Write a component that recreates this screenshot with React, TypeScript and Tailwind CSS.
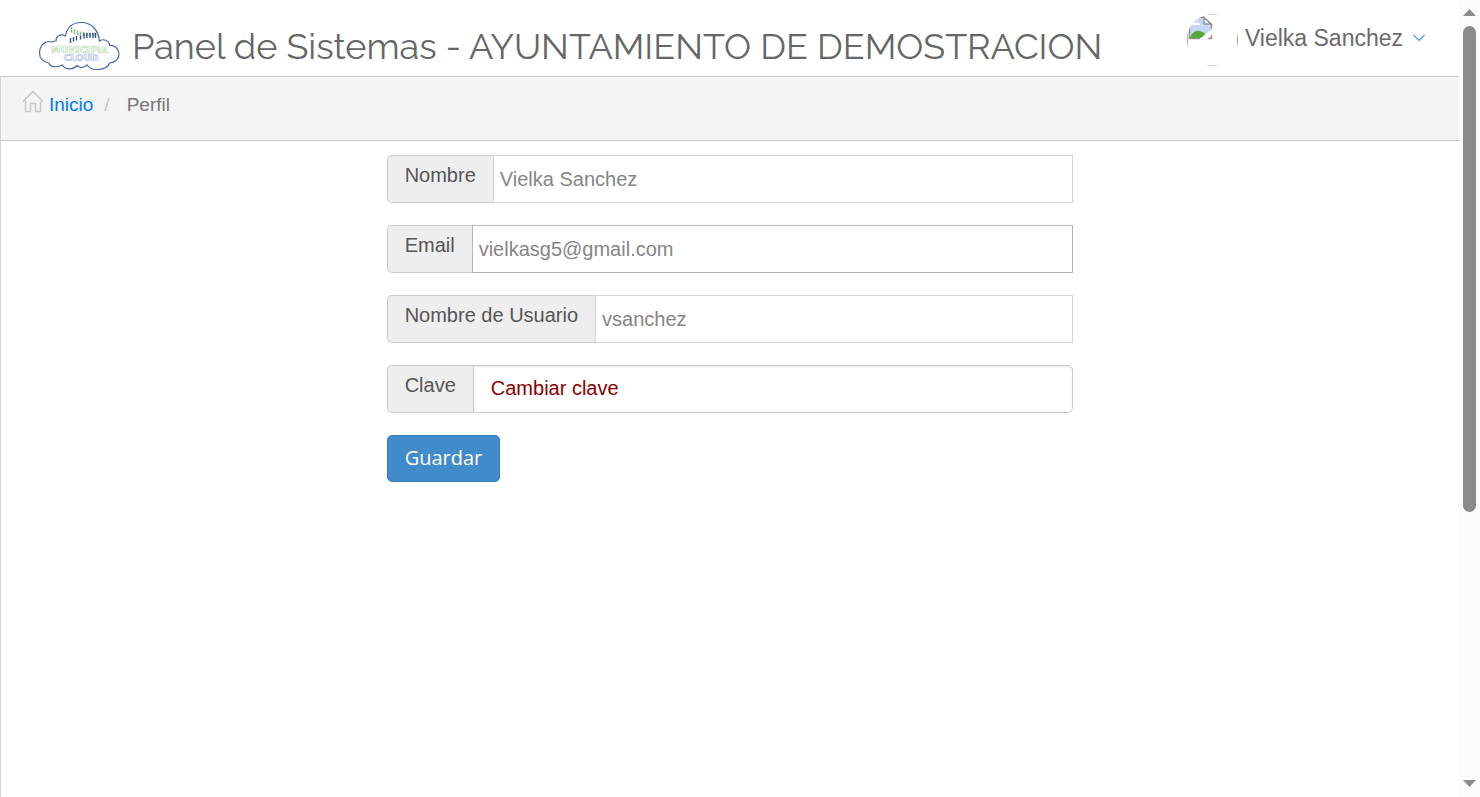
import type { ReactNode } from "react";

function CloudLogo() {
  return (
    <svg width="82" height="50" viewBox="0 0 82 50" role="img" aria-label="Municipia Cloud" className="shrink-0">
      <path
        d="M18 20C18 14.500 23 12.500 27.500 15C29 6 35 1.500 43.500 1.500C53 1.500 60 8 61.500 20C66 17 71.500 20 71.500 24.500C77 24 81 28 81 33C81 38 77 41.500 71.500 42C70 47 64 48.500 59 48.500C54 48.500 51 47 49 44C46 47 42 47 39 44.500C35 49 27 49 24.500 44C18 47 12 46 11 42C5 41 1.500 37 1.500 32C1.500 24 8 19 14 21C15 20 16 20 18 20Z"
        fill="#fff"
        stroke="#4468a8"
        strokeWidth="1.200"
      />
      <path
        d="M33.500 6v5.500M36.500 8.500v4.500M39.500 9.500v4.500M42.500 10.500v4M45.500 11v4M48.500 11.500v3.500M51.500 11.500v3.500M54.500 11.500v3.500M57 11.500v3.500"
        stroke="#8db583"
        strokeWidth="1.500"
      />
      <path
        d="M32.500 17v5M35.500 16v4.500M38.500 15v4.500M42.500 14.500v4M46 12v5.500M49 12v5M52 12v5M55 12v5M57.500 12v5"
        stroke="#35568f"
        strokeWidth="1.400"
      />
      <text x="41.500" y="31.500" textAnchor="middle" fontFamily="DejaVu Sans, sans-serif" fontWeight="700" fontSize="9.500" fill="#fff" stroke="#bddcb7" strokeWidth="0.700">
        MUNICIPIA
      </text>
      <text x="43" y="40" textAnchor="middle" fontFamily="DejaVu Sans, sans-serif" fontWeight="700" fontSize="9" fill="#fff" stroke="#a9bbdc" strokeWidth="0.700">
        CLOUD
      </text>
    </svg>
  );
}

function Avatar() {
  return (
    <svg width="52" height="52" viewBox="0 0 52 52" role="img" aria-label="Foto de perfil" className="shrink-0">
      <defs>
        <clipPath id="avatar-round">
          <circle cx="25.500" cy="26" r="25.800" />
        </clipPath>
      </defs>
      <g clipPath="url(#avatar-round)">
        <rect x="0.500" y="0.500" width="50" height="51" fill="none" stroke="#b0b0b0" />
        <path d="M2.500 3.500h14.500l7.500 7v14h-22z" fill="#c5d7f5" stroke="#929292" strokeWidth="1.500" />
        <path d="M4 11c0-3 3-3 4-2c2-2 5 0 5 2z" fill="#fff" />
        <path d="M3 24c1-5 6-8 10-7c4 1 6 3 7 7z" fill="#58a83a" />
        <path d="M12 25.500L26 14v6l-6 5.500z" fill="#fff" />
        <path d="M17 3.500v6.500h7z" fill="#f4f4f4" stroke="#929292" strokeWidth="1.500" />
      </g>
    </svg>
  );
}

function HomeIcon() {
  return (
    <svg width="22" height="23" viewBox="0 0 22 23" fill="none" stroke="#c8c8c8" strokeWidth="1.500" aria-hidden="true" className="shrink-0">
      <path d="M1 11.500L11 1.500L21 11.500M3.500 11v10.500h5v-8h5v8h5V11" />
    </svg>
  );
}

const addon =
  "flex items-start rounded-l-[5px] border border-r-0 border-[#ccc] bg-[#eee] px-[17px] pt-1 text-[20px] leading-[30px] text-[#555]";

function Field({ id, label, children }: { id: string; label: string; children: ReactNode }) {
  return (
    <div className="flex h-12 items-stretch">
      <label htmlFor={id} className={addon}>
        {label}
      </label>
      {children}
    </div>
  );
}

const inputBase = "min-w-0 flex-1 border bg-white px-1.5 text-[20px] text-[#858585] outline-none";

function ScrollRail() {
  return (
    <div aria-hidden="true" className="flex w-[21px] shrink-0 flex-col items-center bg-[#fcfcfc] pt-[9px] pb-2.5">
      <svg width="13" height="7" viewBox="0 0 13 7">
        <path d="M0 7L6.500 0L13 7z" fill="#8b8b8b" />
      </svg>
      <div className="mt-2.5 flex w-[13px] flex-1 flex-col">
        <div className="h-[64.5%] rounded-full bg-[#8b8b8b]" />
      </div>
      <svg width="13" height="7" viewBox="0 0 13 7">
        <path d="M0 0h13L6.500 7z" fill="#8b8b8b" />
      </svg>
    </div>
  );
}

export default function App() {
  return (
    <div className="flex min-h-screen bg-white font-['Liberation_Sans',Arial,sans-serif]">
      <div className="flex min-w-0 flex-1 flex-col">
        <header className="flex h-[76px] items-center justify-between pr-[34px] pl-[38px]">
          <div className="flex items-center gap-3 pt-4">
            <CloudLogo />
            <h1 className="font-[Raleway,Lato,sans-serif] text-[36px] leading-[44px] font-normal whitespace-nowrap text-[#666]">
              Panel de Sistemas - AYUNTAMIENTO DE DEMOSTRACION
            </h1>
          </div>
          <button type="button" className="flex items-start gap-1.5 pt-1 text-[23px] leading-[48px] whitespace-nowrap text-[#6b6b6b]">
            <Avatar />
            Vielka Sanchez
            <svg width="12" height="8" viewBox="0 0 12 8" fill="none" stroke="#3c9cff" strokeWidth="1.200" aria-hidden="true" className="mt-5 ml-1">
              <path d="M0.500 1L6 6.500L11.500 1" />
            </svg>
          </button>
        </header>
        <div className="flex flex-1 flex-col border-t border-l border-t-[#c8c8c8] border-l-[#d4d4d4]">
          <nav aria-label="Ruta" className="h-16 border-b border-[#c8c8c8] bg-[#f4f4f4] px-[21px] pt-[13px]">
            <ol className="flex items-center text-[19px] leading-[30px]">
              <li>
                <a href="#inicio" className="flex items-start gap-[5px] text-[#007bff]">
                  <HomeIcon />
                  Inicio
                </a>
              </li>
              <li aria-hidden="true" className="px-[11px] text-[#c4c4c4]">
                /
              </li>
              <li aria-current="page" className="pl-1.5 text-[#777]">
                Perfil
              </li>
            </ol>
          </nav>
          <main className="pt-3.5">
            <form className="mx-auto flex w-[47.1%] flex-col gap-[22px]" onSubmit={(e) => e.preventDefault()}>
              <Field id="nombre" label="Nombre">
                <input id="nombre" type="text" defaultValue="Vielka Sanchez" className={`${inputBase} border-[#d5d5d5]`} />
              </Field>
              <Field id="email" label="Email">
                <input id="email" type="email" defaultValue="vielkasg5@gmail.com" className={`${inputBase} border-[#b5b5b5]`} />
              </Field>
              <Field id="usuario" label="Nombre de Usuario">
                <input id="usuario" type="text" defaultValue="vsanchez" className={`${inputBase} border-[#d5d5d5]`} />
              </Field>
              <div className="flex h-12 items-stretch">
                <span className={addon}>Clave</span>
                <div className="flex flex-1 items-start rounded-r-[5px] border border-[#ccc] px-[17px] pt-[7px] shadow-[inset_0_1px_2px_rgba(0,0,0,0.1)]">
                  <a href="#clave" className="text-[20px] leading-[30px] text-[#8b0000]">
                    Cambiar clave
                  </a>
                </div>
              </div>
              <button
                type="submit"
                className="h-[47px] self-start rounded-[5px] border border-[#357ebd] bg-[#428bca] px-[17px] pb-0.5 font-['Open_Sans',sans-serif] text-[20px] text-white"
              >
                Guardar
              </button>
            </form>
          </main>
        </div>
      </div>
      <ScrollRail />
    </div>
  );
}
